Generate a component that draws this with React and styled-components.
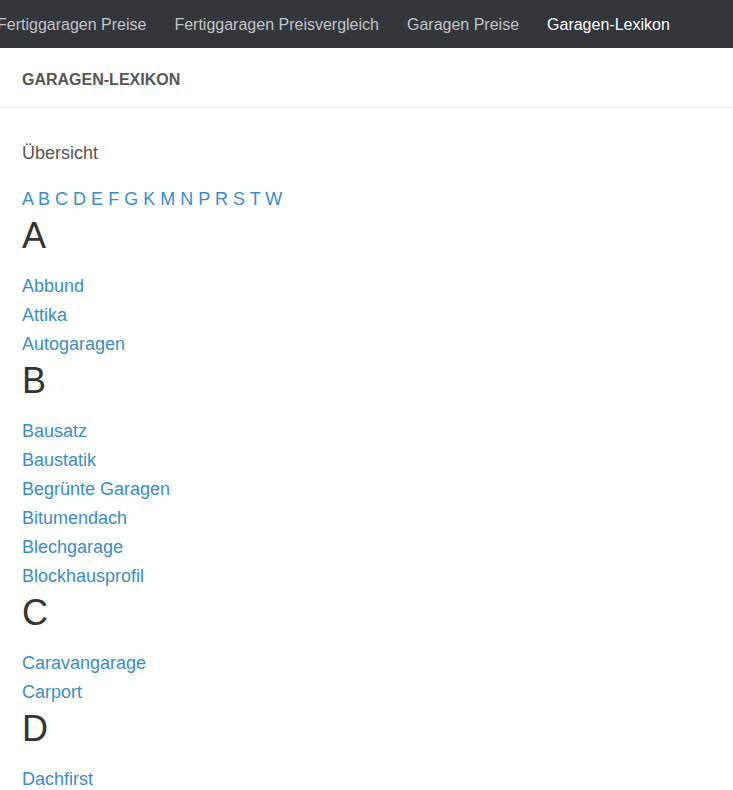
import React from "react";
import styled, { createGlobalStyle } from "styled-components";

const GlobalStyle = createGlobalStyle`
  html, body {
    margin: 0;
    padding: 0;
    background: #fff;
    font-family: "Liberation Sans", Arial, sans-serif;
    font-size: 16px;
    color: #333;
  }
`;

const navItems = [
  { label: "Fertiggaragen Preise" },
  { label: "Fertiggaragen Preisvergleich" },
  { label: "Garagen Preise" },
  { label: "Garagen-Lexikon", active: true },
];

const letters = ["A", "B", "C", "D", "E", "F", "G", "K", "M", "N", "P", "R", "S", "T", "W"];

const sections = [
  { letter: "A", terms: ["Abbund", "Attika", "Autogaragen"] },
  {
    letter: "B",
    terms: ["Bausatz", "Baustatik", "Begrünte Garagen", "Bitumendach", "Blechgarage", "Blockhausprofil"],
  },
  { letter: "C", terms: ["Caravangarage", "Carport"] },
  { letter: "D", terms: ["Dachfirst", "Dachrinne", "Doppelgarage"] },
];

const Page = styled.div`
  width: 100%;
  overflow: hidden;
`;

const NavBar = styled.nav`
  height: 48px;
  background: #33363b;
  display: flex;
  align-items: center;
  overflow: hidden;
`;

const NavList = styled.ul`
  list-style: none;
  display: flex;
  margin: 0 0 0 -17px;
  padding: 0;
  white-space: nowrap;
`;

const NavItem = styled.li`
  padding: 1px 14px 0;
  line-height: 47px;
  color: ${(p) => (p.$active ? "#ffffff" : "#c4c5c7")};
`;

const PageHeader = styled.header`
  height: 59px;
  padding: 0 22px;
  display: flex;
  align-items: center;
  border-bottom: 1px solid #e8e8e8;
`;

const HeaderTitle = styled.h2`
  margin: 4px 0 0;
  font-size: 16px;
  font-weight: bold;
  color: #555;
`;

const Content = styled.main`
  padding: 31px 22px 0;
  font-size: 18px;
`;

const Overview = styled.p`
  margin: 0 0 17px;
  line-height: 29px;
  color: #555;
`;

const LetterNav = styled.div`
  line-height: 29px;
`;

const Link = styled.a`
  color: #3a8dc3;
  text-decoration: none;
`;

const LetterHeading = styled.h1`
  margin: 2px 0 16px;
  font-size: 36px;
  font-weight: normal;
  line-height: 40px;
  color: #333;
`;

const TermList = styled.ul`
  list-style: none;
  margin: 0;
  padding: 0;
`;

const TermItem = styled.li`
  line-height: 29px;
`;

export default function App() {
  return (
    <Page>
      <GlobalStyle />
      <NavBar>
        <NavList>
          {navItems.map((item) => (
            <NavItem key={item.label} $active={item.active}>
              {item.label}
            </NavItem>
          ))}
        </NavList>
      </NavBar>
      <PageHeader>
        <HeaderTitle>GARAGEN-LEXIKON</HeaderTitle>
      </PageHeader>
      <Content>
        <Overview>Übersicht</Overview>
        <LetterNav>
          {letters.map((l, i) => (
            <React.Fragment key={l}>
              <Link href={`#${l}`}>{l}</Link>
              {i < letters.length - 1 ? " " : ""}
            </React.Fragment>
          ))}
        </LetterNav>
        {sections.map((s) => (
          <section key={s.letter} id={s.letter}>
            <LetterHeading>{s.letter}</LetterHeading>
            <TermList>
              {s.terms.map((t) => (
                <TermItem key={t}>
                  <Link href="#">{t}</Link>
                </TermItem>
              ))}
            </TermList>
          </section>
        ))}
      </Content>
    </Page>
  );
}
